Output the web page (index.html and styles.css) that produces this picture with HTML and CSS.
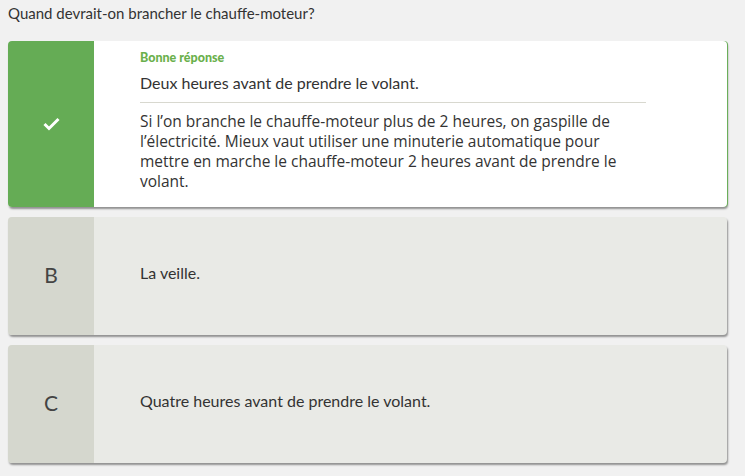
FILE: index.html
```html
<!DOCTYPE html>
<html lang="fr">
  <head>
    <meta charset="UTF-8" />
    <title>Quiz</title>
    <link rel="stylesheet" href="styles.css">
  </head>
  <body>
    <div class="quiz">
      <h1 class="question">Quand devrait-on brancher le chauffe-moteur?</h1>
      <div class="answers">
        <div class="answer correct">
          <div class="marker">
            <svg width="17" height="14" viewBox="0 0 17 14">
              <polyline points="1.5,7 6,11.5 15.5,2" fill="none" stroke="#fff" stroke-width="3" />
            </svg>
          </div>
          <div class="body">
            <div class="label">Bonne réponse</div>
            <div class="text">Deux heures avant de prendre le volant.</div>
            <p class="explain">Si l’on branche le chauffe-moteur plus de 2 heures, on gaspille de l’électricité. Mieux vaut utiliser une minuterie automatique pour mettre en marche le chauffe-moteur 2 heures avant de prendre le volant.</p>
          </div>
        </div>
        <div class="answer">
          <div class="marker letter">B</div>
          <div class="body">
            <div class="text">La veille.</div>
          </div>
        </div>
        <div class="answer">
          <div class="marker letter">C</div>
          <div class="body">
            <div class="text">Quatre heures avant de prendre le volant.</div>
          </div>
        </div>
      </div>
    </div>
  </body>
</html>
```

FILE: styles.css
```css
* {
  box-sizing: border-box;
  margin: 0;
  padding: 0;
}

body {
  background-color: #f1f1f1;
  font-family: Lato, "Open Sans", sans-serif;
  color: #333;
  padding: 4px 8px;
}

.quiz {
  width: 719px;
}

.question {
  font-size: 15px;
  font-weight: normal;
  line-height: 18px;
  margin-bottom: 19px;
}

.answers {
  display: flex;
  flex-direction: column;
  gap: 10px;
}

.answer {
  display: flex;
  min-height: 118px;
  border-radius: 4px;
  overflow: hidden;
  background-color: #e9eae6;
  box-shadow: 1px 2px 2px rgba(0, 0, 0, 0.4);
}

.answer.correct {
  background-color: #fff;
  box-shadow: 1px 0 0 #6aae5a, 1px 2px 2px rgba(0, 0, 0, 0.4);
}

.marker {
  width: 86px;
  flex-shrink: 0;
  display: flex;
  align-items: center;
  justify-content: center;
  background-color: #d5d7ce;
  font-size: 21px;
  color: #444;
}

.marker.letter {
  padding-bottom: 4px;
}

.correct .marker {
  background-color: #65ac55;
}

.body {
  flex: 1;
  display: flex;
  flex-direction: column;
  justify-content: center;
  padding: 9px 81px 16px 46px;
}

.correct .body {
  justify-content: flex-start;
}

.label {
  font-size: 12.5px;
  font-weight: 900;
  line-height: 16px;
  color: #6ab04c;
  margin-bottom: 7px;
}

.text {
  font-size: 16px;
  line-height: 20px;
}

.correct .text {
  padding-bottom: 9px;
  border-bottom: 1px solid #d8d8cf;
}

.explain {
  font-family: "Open Sans", sans-serif;
  font-size: 15.5px;
  line-height: 20px;
  padding-top: 8px;
}
```
